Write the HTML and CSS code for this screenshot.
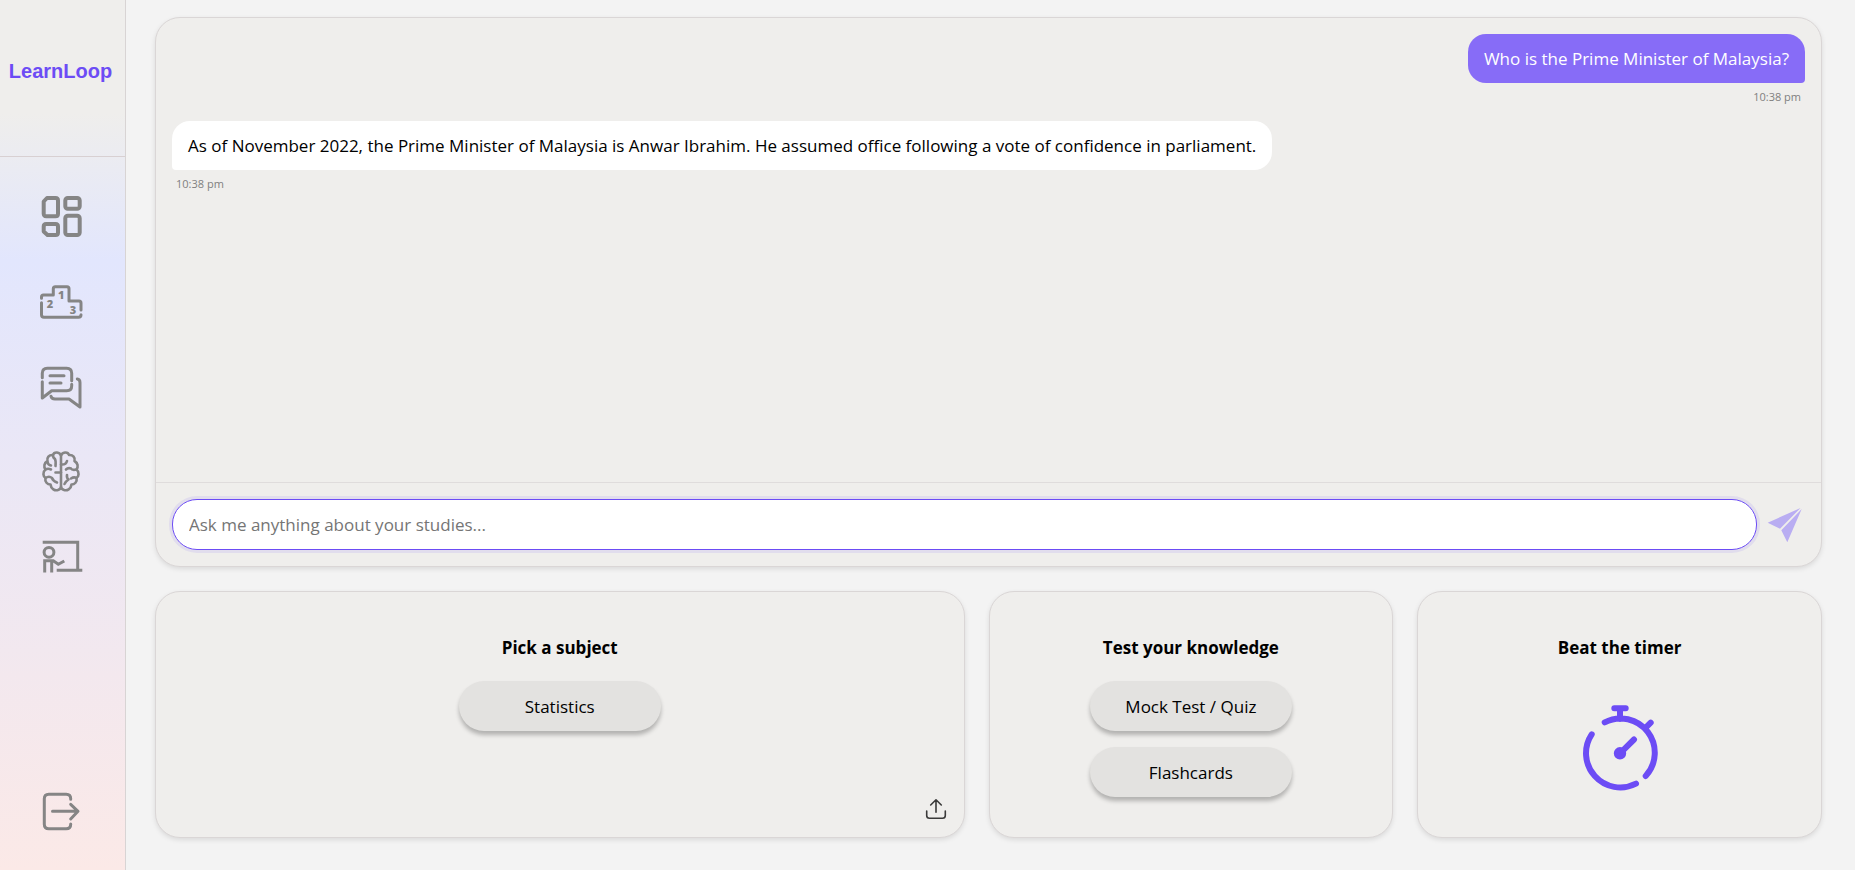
FILE: index.html
```html
<!DOCTYPE html>
<html lang="en">
<head>
<meta charset="utf-8">
<meta name="viewport" content="width=device-width, initial-scale=1">
<title>LearnLoop</title>
<link rel="stylesheet" href="styles.css">
</head>
<body>
<div class="app">
  <aside class="sidebar">
    <div class="brand">LearnLoop</div>
    <nav class="nav" aria-label="Main">
      <a class="nav-link" href="#dashboard" aria-label="Dashboard">
        <svg class="icon icon-bold" viewBox="0 0 44 44"><path d="M7 3H15.500Q18 3 18 5.500V18.800Q18 21.300 15.500 21.300H6.200Q3.700 21.300 3.700 18.800V6.500Z"/><rect x="25.300" y="3" width="14.400" height="10.700" rx="2.500"/><path d="M6.200 29H15.500Q18 29 18 31.500V37.500Q18 40 15.500 40H7.500L3.700 36.500V31.500Q3.700 29 6.200 29Z"/><rect x="25.300" y="20.700" width="14.400" height="19.300" rx="2.500"/></svg>
      </a>
      <a class="nav-link" href="#leaderboard" aria-label="Leaderboard">
        <svg class="icon" viewBox="0 0 44 44"><path d="M1.500 18.300V17Q1.500 15 3.500 15H13.300V8.700Q13.300 6.700 15.300 6.700H27Q29 6.700 29 8.700V21H39Q41 21 41 23V30M41 34.700Q41 37.300 38.500 37.300H4Q1.500 37.300 1.500 34.800V22.700"/><g class="digits"><text x="21.300" y="19">1</text><text x="10" y="28">2</text><text x="33" y="34">3</text></g></svg>
      </a>
      <a class="nav-link" href="#chat" aria-label="Chat">
        <svg class="icon" viewBox="0 0 44 44"><path d="M2.300 12.700V8.300Q2.300 3.300 7.300 3.300H26.700Q31.700 3.300 31.700 8.300V15.700M31.700 19.300V20.700Q31.700 25.700 26.700 25.700H11.700L2.300 33V16.700M10 10.700H24M10 18H21M37.300 14Q40 14.300 40 17.700V42L29 34H15Q11.500 34 11 31.300"/></svg>
      </a>
      <a class="nav-link" href="#mind" aria-label="Brain training">
        <svg class="icon icon-brain" viewBox="0 0 44 44"><path d="M21 6C20 1.500 14 1.500 13 5C9 4.500 6.500 8 7.500 11C4 13 3.500 17 5.500 19.500C2.500 22 3 26.500 5.500 28C4.500 32 7.500 34.500 10.500 34.500C11 39 15 41 18 40C20 39.500 21 38 21 36ZM21 6C22 1.500 28 1.500 29 5C33 4.500 35.500 8 34.500 11C38 13 38.500 17 36.500 19.500C39.500 22 39 26.500 36.500 28C37.500 32 34.500 34.500 31.500 34.500C31 39 27 41 24 40C22 39.500 21 38 21 36Z"/><path d="M13 5Q13 8 15 9Q16 11 15.500 16M7.500 12Q8 15 11 15.500M5.500 19.500Q8 18 11 19.500M21 22.500H15.500M5.500 28Q9 25.500 12 28Q13 31 17 32.500M21 14.500Q26 15 27 11M36.500 19.500Q32 20.500 31 18.500Q28 17.500 26 19.500M27 25Q26.500 28 28.500 29.500Q26 31 24.500 34M36.500 28Q34 26.500 31 28.500"/></svg>
      </a>
      <a class="nav-link" href="#classroom" aria-label="Classroom">
        <svg class="icon icon-square" viewBox="0 0 44 44"><path d="M2.700 7.300H37.700V35.300M16.700 35.300H42.300M4.700 37.500V25.700H13.300L18.300 29.300L24.300 26M11.700 37.500V26"/><circle cx="9" cy="17.300" r="4.900"/></svg>
      </a>
    </nav>
    <a class="nav-link logout" href="#logout" aria-label="Log out">
      <svg class="icon" viewBox="0 0 44 44"><path d="M30.700 10.300V9.800Q30.700 5.300 26.200 5.300H8.800Q4.300 5.300 4.300 9.800V35.200Q4.300 39.700 8.800 39.700H26.200Q30.700 39.700 30.700 35.200V35M12.500 22.300H37.500M30.700 15.300L38 22.300L30.700 30"/></svg>
    </a>
  </aside>

  <main class="main">
    <section class="card chat" aria-label="Chat">
      <div class="messages">
        <div class="message message-sent">
          <p class="bubble">Who is the Prime Minister of Malaysia?</p>
          <time class="time">10:38 pm</time>
        </div>
        <div class="message">
          <p class="bubble">As of November 2022, the Prime Minister of Malaysia is Anwar Ibrahim. He assumed office following a vote of confidence in parliament.</p>
          <time class="time">10:38 pm</time>
        </div>
      </div>
      <form class="composer">
        <input class="prompt" type="text" aria-label="Your question" placeholder="Ask me anything about your studies...">
        <button class="send" type="button" aria-label="Send">
          <svg class="send-icon" viewBox="0 0 40 40"><path d="M2.700 17.700L35.500 3L15 23.700ZM36.700 4L22.300 37.300L16.300 25.300Z"/></svg>
        </button>
      </form>
    </section>

    <div class="panels">
      <section class="card panel">
        <h2 class="panel-title">Pick a subject</h2>
        <button class="pill" type="button">Statistics</button>
        <button class="upload" type="button" aria-label="Upload">
          <svg class="upload-icon" viewBox="0 0 24 24"><path d="M2.700 14V18.500Q2.700 21.300 5.500 21.300H18.500Q21.300 21.300 21.300 18.500V14M12 15.300V3M6.700 8L12 2.800L17.300 8"/></svg>
        </button>
      </section>
      <section class="card panel">
        <h2 class="panel-title">Test your knowledge</h2>
        <button class="pill" type="button">Mock Test / Quiz</button>
        <button class="pill" type="button">Flashcards</button>
      </section>
      <section class="card panel">
        <h2 class="panel-title">Beat the timer</h2>
        <button class="timer" type="button" aria-label="Start timer">
          <svg class="timer-icon" viewBox="0 0 88 100"><path d="M15.700 36.300A34.300 34.300 0 0 0 60 85.700M69.700 78A34.300 34.300 0 0 0 28.700 24.300M38.300 10.300H49.700M44 10.300V21M69.700 29.700L74.700 24.700M44 55.300L58 41.500"/><circle cx="44" cy="55.300" r="3.200"/></svg>
        </button>
      </section>
    </div>
  </main>
</div>
</body>
</html>
```
FILE: styles.css
```css
* {
  box-sizing: border-box;
}

body {
  margin: 0;
  background: #f3f3f3;
  color: #000;
  font-family: "Segoe UI", "Open Sans", sans-serif;
  font-size: 17px;
  line-height: 25px;
}

button,
input {
  font: inherit;
  color: inherit;
}

button {
  padding: 0;
  border: 0;
  background: none;
  cursor: pointer;
}

svg {
  display: block;
  fill: none;
  stroke-linecap: round;
  stroke-linejoin: round;
}

.app {
  display: flex;
  min-height: 100vh;
}

/* Sidebar */

.sidebar {
  display: flex;
  flex-direction: column;
  flex: none;
  width: 126px;
  padding-bottom: 37px;
  border-right: 1px solid #d8d4d4;
  background: linear-gradient(180deg, #efeeec 13%, #e2e6fd 30%, #fbe9e7 100%);
}

.brand {
  display: flex;
  align-items: center;
  justify-content: center;
  height: 157px;
  padding-bottom: 14px;
  padding-right: 4px;
  border-bottom: 1px solid #d8d0d2;
  color: #6c4cf5;
  font-family: "Liberation Sans", Arial, sans-serif;
  font-size: 20px;
  font-weight: 700;
}

.nav {
  display: flex;
  flex-direction: column;
  gap: 41px;
  padding-top: 38px;
}

.nav-link {
  display: flex;
  justify-content: center;
  padding-right: 2px;
}

.logout {
  margin-top: auto;
}

.icon {
  width: 44px;
  height: 44px;
  stroke: #858585;
  stroke-width: 3;
}

.icon-bold {
  stroke-width: 4;
}

.icon-brain {
  stroke-width: 2.6;
}

.icon-square {
  stroke-linecap: butt;
  stroke-linejoin: miter;
}

.digits {
  fill: #858585;
  stroke: none;
  font-family: "Open Sans", sans-serif;
  font-size: 11px;
  font-weight: 800;
  text-anchor: middle;
}

/* Main area */

.main {
  display: flex;
  flex: 1;
  flex-direction: column;
  gap: 24px;
  min-width: 0;
  padding: 17px 33px 32px 29px;
}

.card {
  border: 1px solid #dad6d6;
  border-radius: 25px;
  background: #efeeec;
  box-shadow: 0 2px 5px rgba(0, 0, 0, 0.1);
}

.chat {
  display: flex;
  flex: 1;
  flex-direction: column;
}

.messages {
  display: flex;
  flex: 1;
  flex-direction: column;
  gap: 16px;
  padding: 16px;
}

.message {
  display: flex;
  flex-direction: column;
  align-items: flex-start;
}

.message-sent {
  align-items: flex-end;
}

.bubble {
  margin: 0;
  padding: 12px 16px;
  border-radius: 18px 18px 18px 4px;
  background: #fff;
}

.message-sent .bubble {
  border-radius: 18px 18px 4px 18px;
  background: #876cf7;
  color: #fff;
}

.time {
  padding: 6px 4px 0;
  color: #808080;
  font-size: 11px;
  line-height: 16px;
}

.composer {
  display: flex;
  align-items: center;
  gap: 8px;
  padding: 16px;
  border-top: 1px solid #dfdcdc;
}

.prompt {
  flex: 1;
  min-width: 0;
  height: 51px;
  padding: 0 16px;
  border: 1px solid #6c4cf5;
  border-radius: 25px;
  outline: 0;
  background: #fff;
  box-shadow: 0 0 0 3px rgba(108, 76, 245, 0.1);
}

.prompt::placeholder {
  color: #757575;
  opacity: 1;
}

.send-icon {
  width: 40px;
  height: 40px;
  fill: #b9adf2;
}

/* Bottom panels */

.panels {
  display: grid;
  grid-template-columns: 2fr 1fr 1fr;
  gap: 24px;
}

.panel {
  position: relative;
  display: flex;
  flex-direction: column;
  align-items: center;
  gap: 16px;
  min-height: 247px;
  padding: 43px 16px 36px;
}

.panel-title {
  margin: 0 0 5px;
  font-size: 17px;
  font-weight: 700;
}

.pill {
  width: 202px;
  height: 50px;
  border-radius: 25px;
  background: #e3e2e0;
  box-shadow: 0 4px 4px rgba(0, 0, 0, 0.25);
}

.upload {
  position: absolute;
  right: 16px;
  bottom: 16px;
}

.upload-icon {
  width: 24px;
  height: 24px;
  stroke: #3a3a3a;
  stroke-width: 1.6;
}

.timer-icon {
  width: 88px;
  height: 100px;
  margin-top: 17px;
  stroke: #6c4cf5;
  stroke-width: 6;
}
```
